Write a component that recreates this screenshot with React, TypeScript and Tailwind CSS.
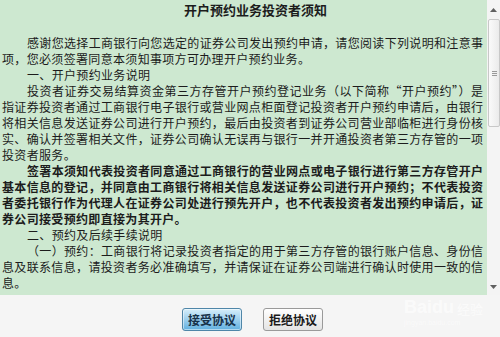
import React from 'react'

interface NoticeLine {
  text: string
  indent?: boolean
  full?: boolean
  bold?: boolean
}

const lines: NoticeLine[] = [
  { text: '感谢您选择工商银行向您选定的证券公司发出预约申请，请您阅读下列说明和注意事', indent: true, full: true },
  { text: '项，您必须签署同意本须知事项方可办理开户预约业务。' },
  { text: '一、开户预约业务说明', indent: true },
  { text: '投资者证券交易结算资金第三方存管开户预约登记业务（以下简称“开户预约”）是', indent: true, full: true },
  { text: '指证券投资者通过工商银行电子银行或营业网点柜面登记投资者开户预约申请后，由银行', full: true },
  { text: '将相关信息发送证券公司进行开户预约，最后由投资者到证券公司营业部临柜进行身份核', full: true },
  { text: '实、确认并签署相关文件，证券公司确认无误再与银行一并开通投资者第三方存管的一项', full: true },
  { text: '投资者服务。' },
  { text: '签署本须知代表投资者同意通过工商银行的营业网点或电子银行进行第三方存管开户', indent: true, full: true, bold: true },
  { text: '基本信息的登记，并同意由工商银行将相关信息发送证券公司进行开户预约；不代表投资', full: true, bold: true },
  { text: '者委托银行作为代理人在证券公司处进行预先开户，也不代表投资者发出预约申请后，证', full: true, bold: true },
  { text: '券公司接受预约即直接为其开户。', bold: true },
  { text: '二、预约及后续手续说明', indent: true },
  { text: '（一）预约：工商银行将记录投资者指定的用于第三方存管的银行账户信息、身份信', indent: true, full: true },
  { text: '息及联系信息，请投资者务必准确填写，并请保证在证券公司端进行确认时使用一致的信', full: true },
  { text: '息。' },
]

function ScrollBar() {
  return (
    <div className="w-[13px] h-full bg-[#f4f4f4] flex flex-col items-center">
      <div className="h-[19px] w-full flex items-center justify-center">
        <svg width="7" height="4" viewBox="0 0 7 4">
          <path d="M0 4 L3.5 0 L7 4 Z" fill="#606060" />
        </svg>
      </div>
      <div className="h-[108px] w-[12px] ml-[1px] border border-[#c8c8c8] rounded-[2px] bg-gradient-to-r from-[#fafafa] to-[#ebebeb] flex items-center justify-center">
        <div className="flex flex-col gap-[1px]">
          <div className="w-[5px] h-px bg-[#9a9a9a]" />
          <div className="w-[5px] h-px bg-[#9a9a9a]" />
          <div className="w-[5px] h-px bg-[#9a9a9a]" />
        </div>
      </div>
      <div className="flex-1" />
      <div className="h-[16px] w-full flex items-center justify-center">
        <svg width="7" height="4" viewBox="0 0 7 4">
          <path d="M0 0 L3.5 4 L7 0 Z" fill="#606060" />
        </svg>
      </div>
    </div>
  )
}

export default function App() {
  return (
    <div className="relative w-[500px] h-[337px] overflow-hidden bg-[#f5f5f5] font-['Noto_Sans_CJK_SC','Noto_Sans',sans-serif]">
      {/* Notice text panel */}
      <div className="flex h-[295px]">
        <div className="w-[487px] h-full overflow-hidden bg-[#cde8d0] text-[#1c1c1c] text-[12px] leading-[16px] pl-[2px] pr-[4px] pt-[2px]">
          <div className="text-center pl-[26px] text-[13px] font-bold">开户预约业务投资者须知</div>
          <div className="mt-[17px]">
            {lines.map((line, i) => (
              <div
                key={i}
                className={`${line.indent ? 'pl-[25px]' : ''} ${line.full ? 'text-justify [text-align-last:justify]' : 'tracking-[0.33px]'} ${line.bold ? 'font-semibold' : ''}`}
              >
                {line.text}
              </div>
            ))}
          </div>
        </div>
        <ScrollBar />
      </div>

      {/* Buttons */}
      <div className="flex justify-center gap-[21px] pl-[5px] pt-[13px]">
        <button className="w-[60px] h-[23px] rounded-[3px] border border-[#4f86a8] bg-gradient-to-b from-[#d6eefa] to-[#5fb0e0] text-[12px] font-bold text-[#17324a] shadow-[inset_0_0_0_1px_rgba(255,255,255,0.5)]">
          接受协议
        </button>
        <button className="w-[60px] h-[23px] rounded-[3px] border border-[#9a9a9a] bg-gradient-to-b from-[#ffffff] to-[#e4e4e4] text-[12px] font-bold text-[#1a1a1a]">
          拒绝协议
        </button>
      </div>

      {/* Watermark */}
      <div className="absolute left-[404px] top-[298px] text-white/60 pointer-events-none">
        <div className="flex items-end">
          <span className="font-['Liberation_Sans',sans-serif] text-[18px] font-bold leading-none">Baidu</span>
          <span className="text-[13px] leading-none ml-[3px] mb-[1px]">经验</span>
        </div>
        <div className="font-['Liberation_Sans',sans-serif] text-[7px] leading-none mt-[3px] text-white/50">jingyan.baidu.com</div>
      </div>
    </div>
  )
}
